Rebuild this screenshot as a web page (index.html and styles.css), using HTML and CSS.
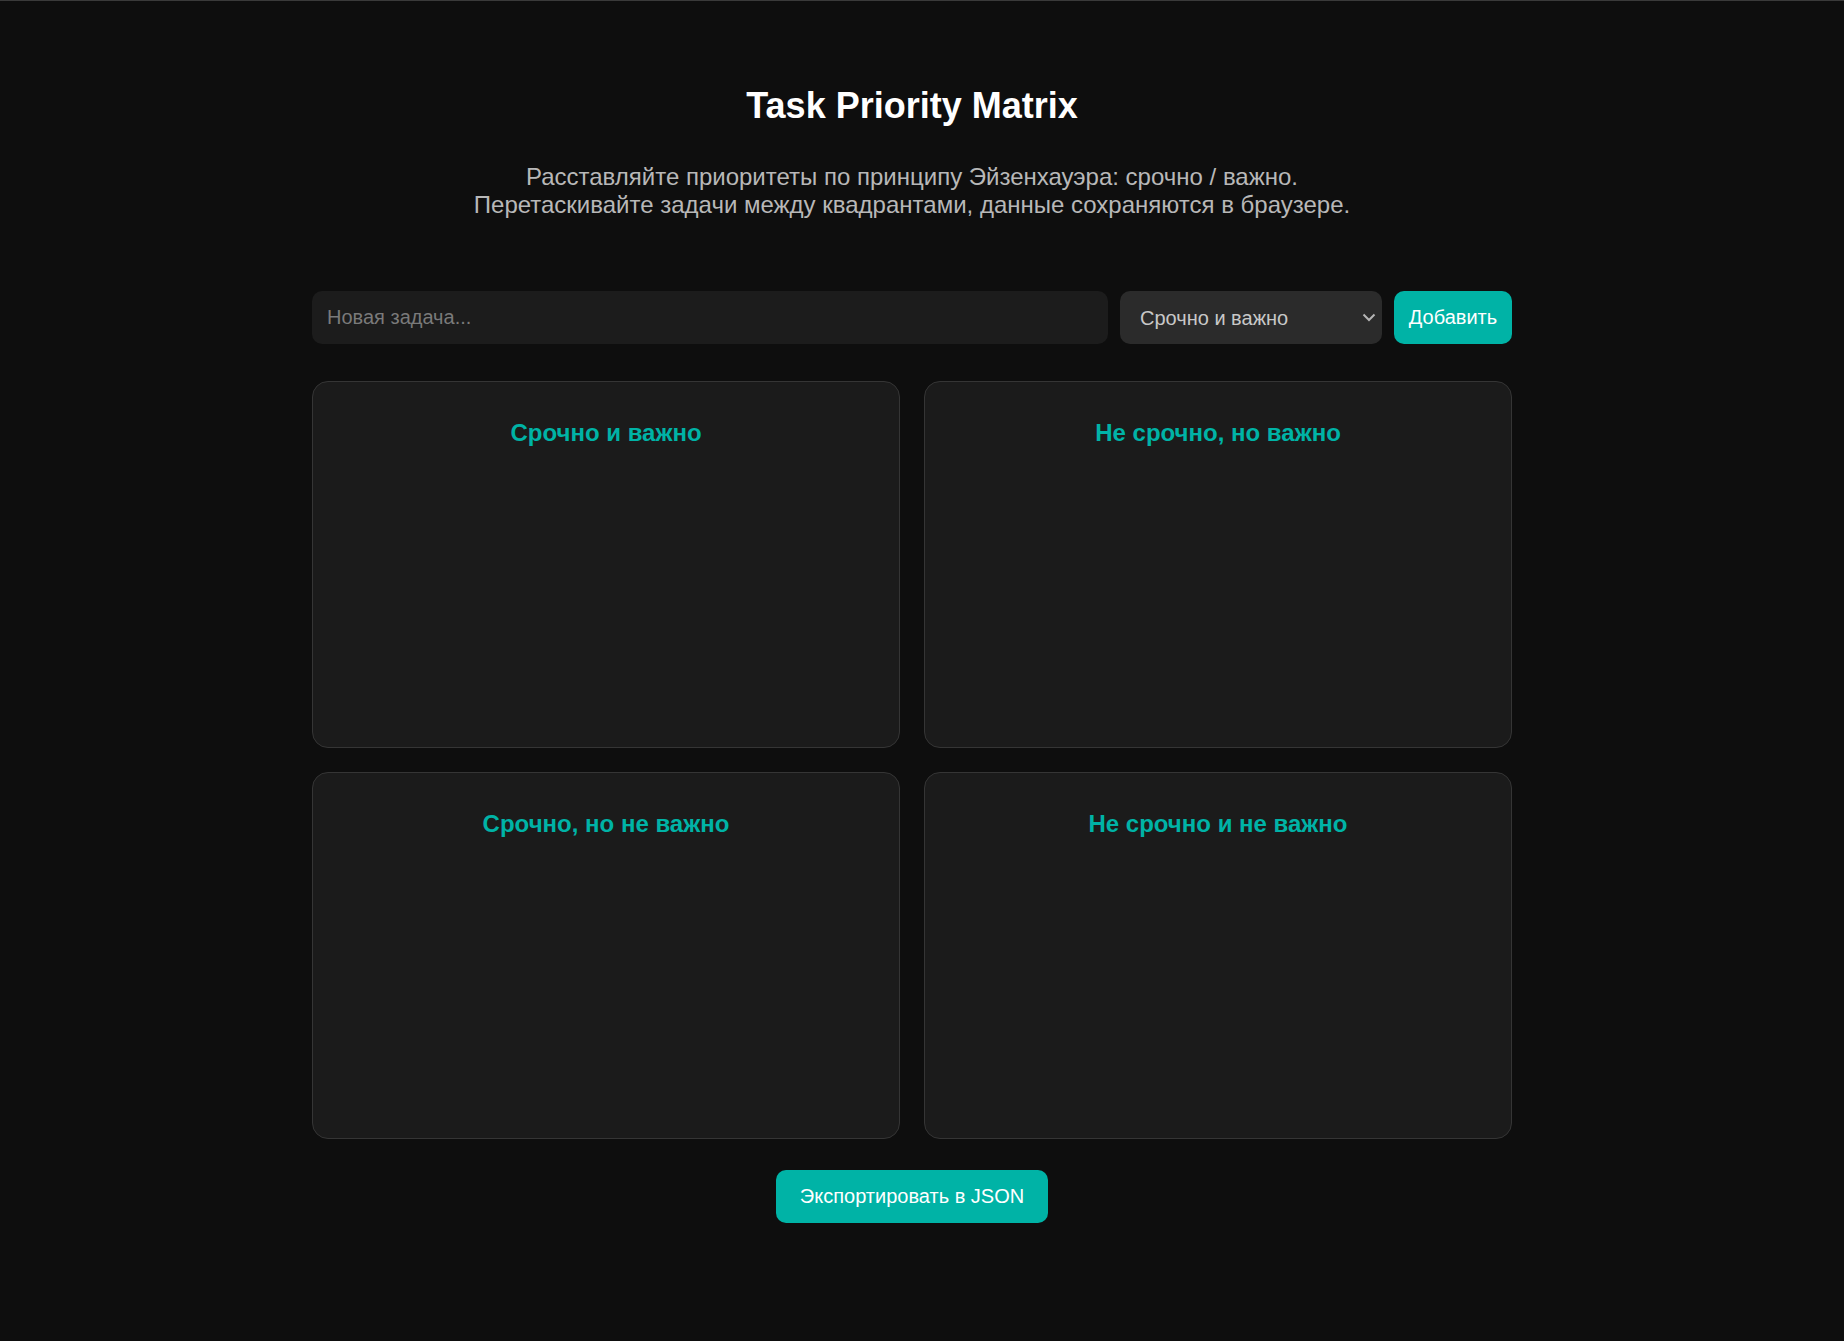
FILE: index.html
```html
<!DOCTYPE html>
<html lang="ru">
<head>
<meta charset="utf-8">
<title>Task Priority Matrix</title>
<link rel="stylesheet" href="styles.css">
</head>
<body>
<div class="app">
  <header class="header">
    <h1 class="title">Task Priority Matrix</h1>
    <p class="subtitle">Расставляйте приоритеты по принципу Эйзенхауэра: срочно / важно.<br>Перетаскивайте задачи между квадрантами, данные сохраняются в браузере.</p>
  </header>
  <form class="add-row">
    <input class="task-input" type="text" placeholder="Новая задача...">
    <div class="select-wrap">
      <select class="quadrant-select">
        <option>Срочно и важно</option>
        <option>Не срочно, но важно</option>
        <option>Срочно, но не важно</option>
        <option>Не срочно и не важно</option>
      </select>
      <svg class="chevron" width="14" height="9" viewBox="0 0 14 9"><path d="M1.5 1.5 L7 7 L12.5 1.5" fill="none" stroke="#b5b5b5" stroke-width="2"/></svg>
    </div>
    <button class="btn add-btn" type="button">Добавить</button>
  </form>
  <main class="matrix">
    <section class="quadrant"><h2 class="q-title">Срочно и важно</h2></section>
    <section class="quadrant"><h2 class="q-title">Не срочно, но важно</h2></section>
    <section class="quadrant"><h2 class="q-title">Срочно, но не важно</h2></section>
    <section class="quadrant"><h2 class="q-title">Не срочно и не важно</h2></section>
  </main>
  <div class="footer">
    <button class="btn export-btn" type="button">Экспортировать в JSON</button>
  </div>
</div>
</body>
</html>
```
FILE: styles.css
```css
html, body {
  margin: 0;
  padding: 0;
}
body {
  background: #0e0e0e;
  border-top: 1px solid #3a3a3a;
  padding-right: 20px;
  min-height: 1340px;
  box-sizing: border-box;
  font-family: "Liberation Sans", Arial, sans-serif;
  color: #e6e6e6;
}
.app {
  max-width: 1200px;
  margin: 0 auto;
}
.header {
  padding-top: 84px;
  text-align: center;
}
.title {
  margin: 0;
  font-size: 36px;
  line-height: 42px;
  font-weight: 700;
  color: #ffffff;
}
.subtitle {
  margin: 36px 0 0;
  font-size: 24px;
  line-height: 27.6px;
  color: #b8b8b8;
}
.add-row {
  display: flex;
  gap: 12px;
  margin: 73px 0 0;
  height: 53px;
}
.task-input {
  flex: 1;
  background: #1c1c1c;
  border: none;
  border-radius: 10px;
  padding: 0 15px;
  font-family: inherit;
  font-size: 20px;
  color: #e6e6e6;
  outline: none;
}
.task-input::placeholder {
  color: #7a7a7a;
}
.select-wrap {
  position: relative;
  width: 262px;
}
.quadrant-select {
  appearance: none;
  -webkit-appearance: none;
  width: 100%;
  height: 100%;
  background: #2b2b2b;
  border: none;
  border-radius: 10px;
  padding: 0 20px;
  font-family: inherit;
  font-size: 20px;
  color: #c8c8c8;
  outline: none;
}
.chevron {
  position: absolute;
  right: 6px;
  top: 22px;
  pointer-events: none;
}
.btn {
  background: #00b3a6;
  color: #ffffff;
  border: none;
  border-radius: 10px;
  font-family: inherit;
  cursor: pointer;
}
.add-btn {
  width: 118px;
  font-size: 20px;
  padding: 0;
}
.matrix {
  display: grid;
  grid-template-columns: 1fr 1fr;
  gap: 24px;
  margin-top: 37px;
}
.quadrant {
  height: 367px;
  box-sizing: border-box;
  background: #1b1b1b;
  border: 1px solid #353535;
  border-radius: 16px;
  padding: 20px;
  text-align: center;
}
.q-title {
  margin: 17px 0 16px;
  font-size: 24px;
  line-height: 28px;
  font-weight: 700;
  color: #00b3a6;
}
.footer {
  display: flex;
  justify-content: center;
  margin-top: 31px;
}
.export-btn {
  height: 53px;
  padding: 0 24px;
  font-size: 20px;
}
```
